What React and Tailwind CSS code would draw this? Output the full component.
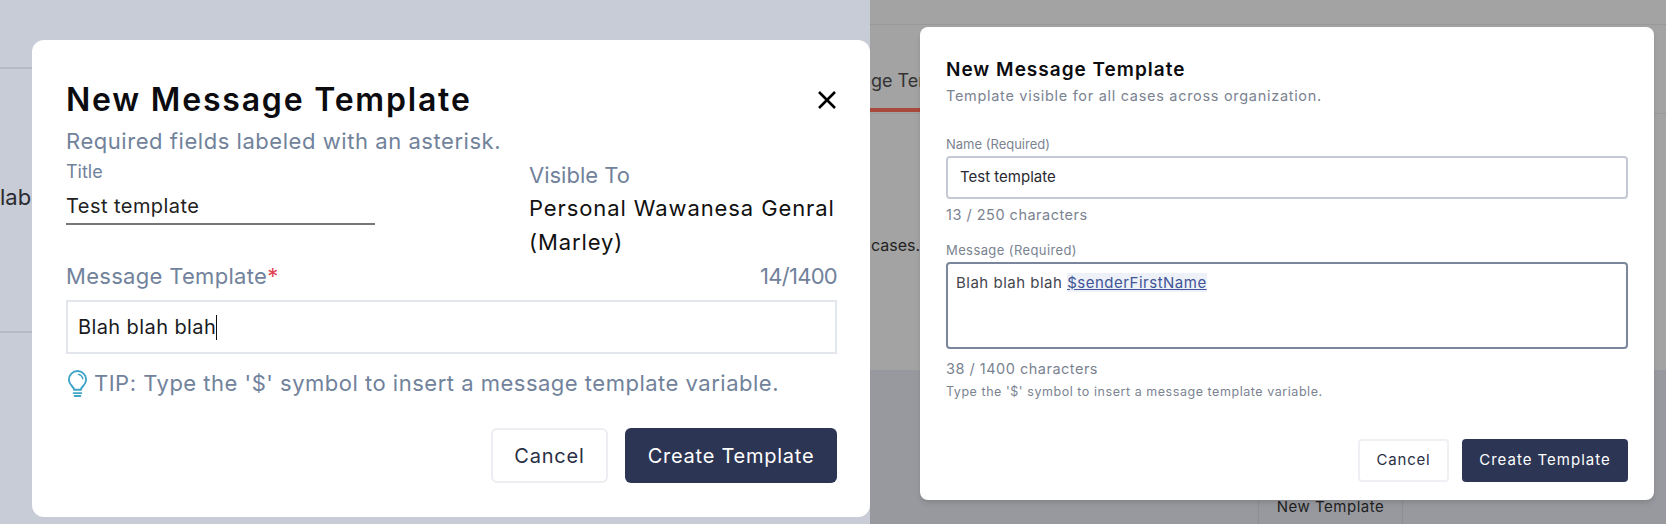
import React from 'react';

const font = 'font-["Inter","Liberation_Sans",sans-serif]';

function BulbIcon() {
  return (
    <svg viewBox="0 0 24 28" className="w-[23px] h-[27px] shrink-0 text-[#3fa5c9]" fill="none" stroke="currentColor" strokeWidth="2" strokeLinecap="round">
      <path d="M8.500 20.500c0-3-5.500-5-5.500-10.500a9 9 0 0 1 18 0c0 5.500-5.500 7.500-5.500 10.500z" />
      <path d="M13 4.500c2.500.5 4 2 4.500 4.500" strokeWidth="1.500" />
      <path d="M8 24h8M9 27h6" />
    </svg>
  );
}

function CloseIcon() {
  return (
    <svg viewBox="0 0 20 20" className="w-5 h-5 text-black" fill="none" stroke="currentColor" strokeWidth="2.600">
      <path d="M2 2l16 16M18 2L2 18" />
    </svg>
  );
}

function LegacyModal() {
  return (
    <div className="absolute left-8 top-10 w-[838px] h-[477px] bg-white rounded-xl pt-10 pl-[34px] pr-[33px]">
      <div className="flex items-center justify-between">
        <h2 className="text-[32px] leading-10 font-semibold text-[#0b0b10] tracking-[1.8px]">New Message Template</h2>
        <CloseIcon />
      </div>
      <p className="mt-[7px] text-[22px] leading-7 text-[#71829b] tracking-[0.55px]">Required fields labeled with an asterisk.</p>
      <div className="mt-[5px] flex">
        <div className="w-[309px]">
          <div className="text-lg leading-6 text-[#71829b]">Title</div>
          <div className="h-[41px] border-b-2 border-[#777] text-xl leading-[44px] text-[#222] tracking-[0.45px]">Test template</div>
        </div>
        <div className="ml-[154px] flex-1">
          <div className="text-[22px] leading-[30px] text-[#71829b]">Visible To</div>
          <div className="mt-px text-[22px] leading-[34px] text-[#111] tracking-[0.9px] whitespace-nowrap">
            Personal Wawanesa Genral<br />(Marley)
          </div>
        </div>
      </div>
      <div className="mt-0.5 flex items-center justify-between text-[22px] leading-[30px] text-[#71829b]">
        <div className="tracking-[0.3px]">Message Template<span className="text-[#e0434f]">*</span></div>
        <div className="tracking-[-0.7px]">14/1400</div>
      </div>
      <div className="mt-[9px] h-[54px] border-2 border-[#e3e6ec] flex items-center pl-[10px] text-xl text-[#1b1b1f] tracking-[0.4px]">
        Blah blah blah<span className="w-px h-[25px] bg-[#111]" />
      </div>
      <div className="mt-[14px] flex items-center gap-[5px] text-[22px] leading-[30px] text-[#71829b] tracking-[0.5px]">
        <BulbIcon />
        <span>TIP: Type the '$' symbol to insert a message template variable.</span>
      </div>
      <div className="mt-[30px] flex justify-end gap-[17px]">
        <button className="w-[117px] h-[55px] border-2 border-[#eceef2] rounded-md text-xl text-[#2a3045] tracking-[0.8px]">Cancel</button>
        <button className="w-[212px] h-[55px] bg-[#2c3553] rounded-md text-xl text-white tracking-[0.75px]">Create Template</button>
      </div>
    </div>
  );
}

function CurrentModal() {
  return (
    <div className="absolute left-[50px] top-[27px] w-[734px] h-[473px] bg-white rounded-lg pt-[29px] pl-[26px] pr-[26px] shadow-md">
      <h2 className="text-[19px] leading-7 font-semibold text-[#0b0b10] tracking-[1px]">New Message Template</h2>
      <p className="mt-px text-[14.500px] leading-[22px] text-[#7b8391] tracking-[0.7px]">Template visible for all cases across organization.</p>
      <label className="mt-7 block text-[13px] leading-[18px] text-[#7b8391]">Name (Required)</label>
      <div className="mt-[3px] h-[43px] border-2 border-[#c4c9d4] rounded flex items-center pl-3 text-[15px] text-[#2a2a30]">Test template</div>
      <div className="mt-1.5 text-[14.500px] leading-5 text-[#7b8391] tracking-[0.5px]">13 / 250 characters</div>
      <label className="mt-4 block text-[13px] leading-[18px] text-[#7b8391] tracking-[0.4px]">Message (Required)</label>
      <div className="mt-[3px] h-[87px] border-2 border-[#7a869b] rounded pl-2 pt-[7px] text-[15px] leading-[24px] text-[#44464e] tracking-[0.5px]">
        Blah blah blah <span className="bg-[#eef1f8] text-[#3f5597] underline">$senderFirstName</span>
      </div>
      <div className="mt-2.5 text-[14.500px] leading-5 text-[#7b8391] tracking-[0.5px]">38 / 1400 characters</div>
      <div className="mt-[5px] text-[12.500px] leading-4 text-[#7b8391] tracking-[0.55px]">Type the '$' symbol to insert a message template variable.</div>
      <div className="mt-[39px] flex justify-end gap-[13px]">
        <button className="w-[91px] h-[43px] border-2 border-[#eef0f3] rounded text-[15px] text-[#2a3045] tracking-[0.8px]">Cancel</button>
        <button className="w-[166px] h-[43px] bg-[#2c3553] rounded text-[15px] text-white tracking-[1px]">Create Template</button>
      </div>
    </div>
  );
}

export default function App() {
  return (
    <div className={`flex w-[1666px] h-[524px] overflow-hidden ${font}`}>
      <section className="relative w-[870px] bg-[#c8ccd6]">
        <div className="mt-[67px] h-0.5 bg-[#b6bac6]" />
        <div className="mt-[116px] text-[22px] leading-6 text-[#2a2a30]">lab</div>
        <div className="mt-[122px] h-0.5 bg-[#b6bac6]" />
        <LegacyModal />
      </section>
      <section className="relative flex-1 bg-[#a3a3a3] flex flex-col">
        <div className="mt-6 h-[90px] shrink-0 border-t border-b border-[#999] text-[#333]">
          <div className="mt-[44px] ml-px text-lg leading-6 whitespace-nowrap">ge Ten</div>
          <div className="mt-[15px] w-[50px] h-1 bg-[#a8493c]" />
        </div>
        <div className="h-[256px] shrink-0 pt-[119px] text-[#222]">
          <div className="ml-px text-base leading-6 whitespace-nowrap">cases.</div>
        </div>
        <div className="flex-1 min-h-0 bg-[#97999e]">
          <div className="ml-[388px] w-[145px] h-full pt-[125px] border-x border-[#8d8f94] text-[15px] leading-6 text-[#1f1f22] text-center tracking-[0.5px]">New Template</div>
        </div>
        <CurrentModal />
      </section>
    </div>
  );
}
